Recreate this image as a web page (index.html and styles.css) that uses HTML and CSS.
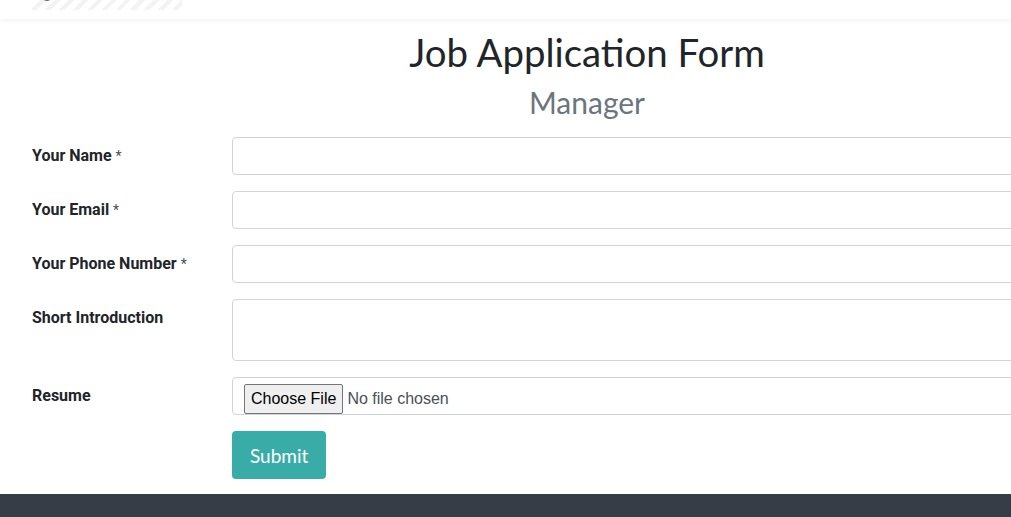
FILE: index.html
```html
<!DOCTYPE html>
<html lang="en">
<head>
<meta charset="utf-8">
<title>Job Application Form</title>
<link rel="stylesheet" href="styles.css">
</head>
<body>
<header class="topbar">
  <div class="brand">
    <span class="brand-mark"></span>
    <span class="brand-hatch"></span>
  </div>
</header>
<main class="page">
  <div class="container">
    <h1 class="title">Job Application Form</h1>
    <h2 class="subtitle">Manager</h2>
    <form class="apply-form">
      <label class="field-label" for="name">Your Name <span class="req">*</span></label>
      <input class="field-input" id="name" type="text">

      <label class="field-label" for="email">Your Email <span class="req">*</span></label>
      <input class="field-input" id="email" type="email">

      <label class="field-label" for="phone">Your Phone Number <span class="req">*</span></label>
      <input class="field-input" id="phone" type="tel">

      <label class="field-label" for="intro">Short Introduction</label>
      <textarea class="field-input field-textarea" id="intro"></textarea>

      <label class="field-label" for="resume">Resume</label>
      <div class="field-input field-file">
        <span class="file-btn">Choose File</span>
        <span class="file-none">No file chosen</span>
      </div>

      <span class="field-spacer"></span>
      <div class="actions"><button type="button" class="submit-btn">Submit</button></div>
    </form>
  </div>
</main>
<footer class="footer"></footer>
</body>
</html>
```
FILE: styles.css
```css
html, body {
  margin: 0;
  padding: 0;
  overflow: hidden;
  background: #ffffff;
}
body {
  width: 1011px;
  height: 517px;
  display: flex;
  flex-direction: column;
  font-family: Roboto, "Liberation Sans", sans-serif;
  color: #212529;
}
.topbar {
  height: 19px;
  flex: none;
  background: #fff;
  box-shadow: 0 1px 6px rgba(0,0,0,0.07);
  position: relative;
  z-index: 2;
  padding-left: 32px;
}
.brand {
  position: relative;
  width: 150px;
  height: 10px;
}
.brand-hatch {
  display: block;
  width: 150px;
  height: 10px;
  background: repeating-linear-gradient(135deg, #ffffff 0 6px, #f3f3f3 6px 10px);
}
.brand-mark {
  position: absolute;
  left: 10px;
  top: -8px;
  width: 10px;
  height: 9px;
  border-radius: 50%;
  background: #6b6b6b;
}
.page {
  flex: 1;
  overflow: hidden;
}
.container {
  width: 1140px;
  margin-left: 17px;
  padding: 0 15px;
  box-sizing: border-box;
}
.title {
  margin: 10px 0 0;
  text-align: center;
  font-family: Lato, "Noto Sans", sans-serif;
  font-weight: 400;
  font-size: 38.4px;
  line-height: 46px;
  color: #212529;
}
.subtitle {
  margin: 9px 0 0;
  text-align: center;
  font-family: Lato, "Noto Sans", sans-serif;
  font-weight: 400;
  font-size: 30px;
  line-height: 36px;
  color: #6c757d;
}
.apply-form {
  margin-top: 17px;
  display: grid;
  grid-template-columns: 200px 1fr;
  row-gap: 16px;
}
.field-label {
  font-size: 16px;
  font-weight: 700;
  line-height: 38px;
  height: 38px;
  color: #212529;
}
.req {
  font-weight: 400;
  font-size: 14px;
  color: #495057;
}
.field-input {
  display: block;
  box-sizing: border-box;
  width: 100%;
  height: 38px;
  border: 1px solid #ced4da;
  border-radius: 4px;
  background: #fff;
  margin: 0;
  padding: 6px 12px;
  font-family: "Liberation Sans", Arial, sans-serif;
  font-size: 16px;
}
.field-textarea {
  height: 62px;
  resize: none;
}
.field-file {
  display: flex;
  align-items: flex-end;
  padding: 0 11px;
}
.file-btn {
  box-sizing: border-box;
  height: 30px;
  line-height: 28px;
  padding: 0 6px;
  border: 1px solid #767676;
  border-radius: 2px;
  background: #efefef;
  color: #000;
  font-size: 16px;
}
.file-none {
  margin-left: 4px;
  line-height: 30px;
  color: #495057;
  font-size: 16px;
}
.actions {
  display: flex;
}
.submit-btn {
  height: 48px;
  padding: 0 18px;
  border: none;
  border-radius: 4px;
  background: #3aaca8;
  color: #fff;
  font-family: Lato, "Noto Sans", sans-serif;
  font-size: 19px;
}
.footer {
  height: 23px;
  flex: none;
  background: #373d46;
}
```
